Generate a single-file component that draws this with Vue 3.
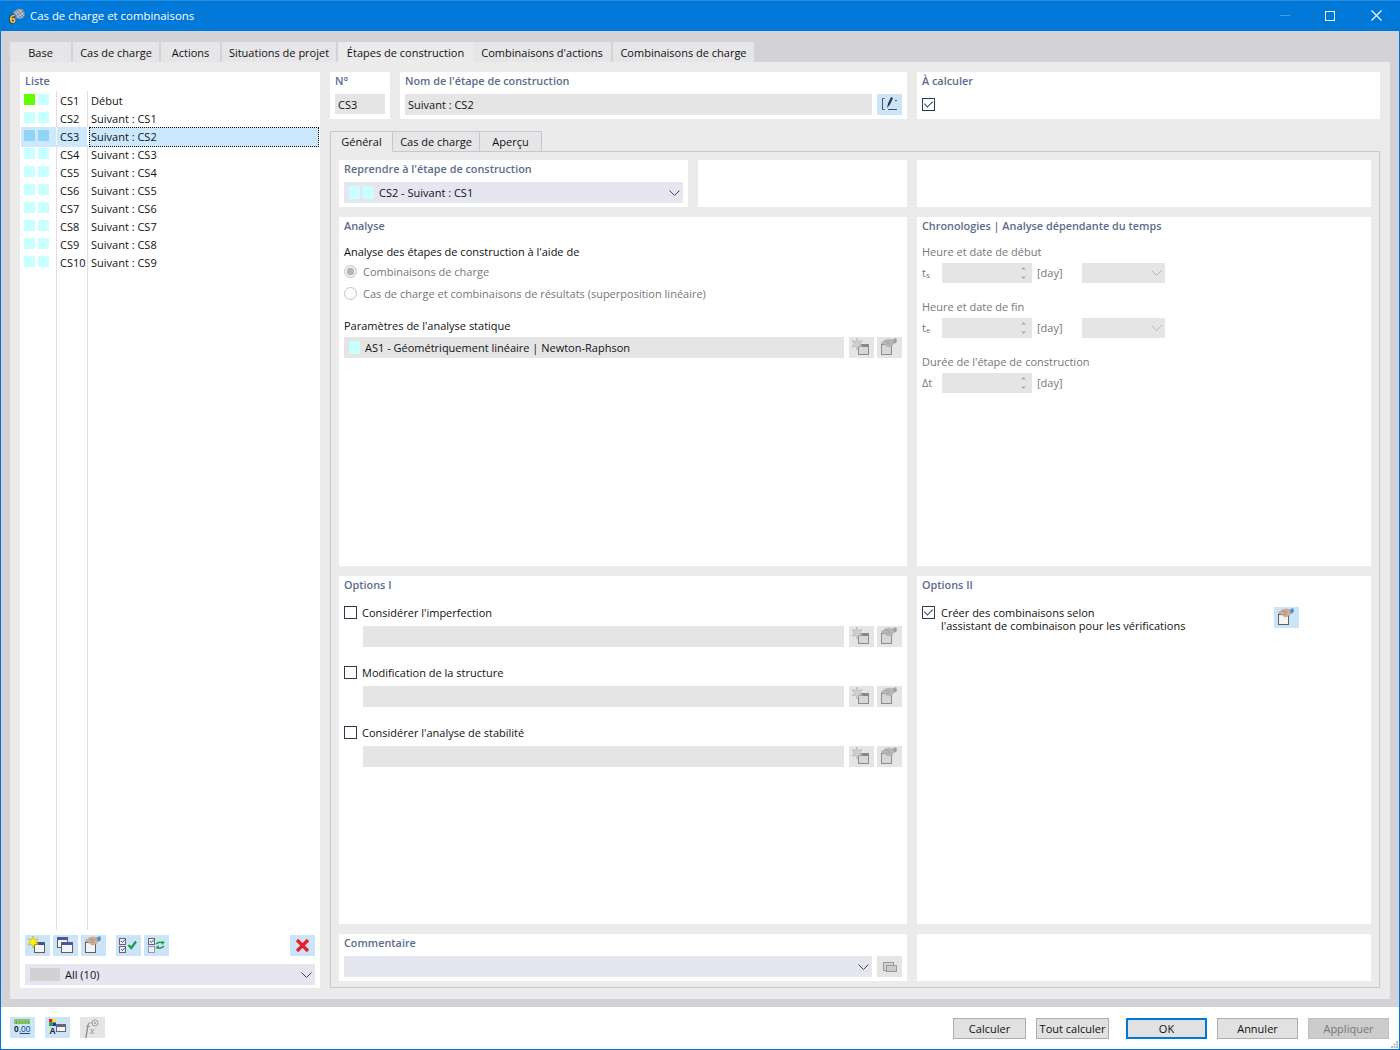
<script setup>
const stages = [
  { id: "CS1", name: "Début", start: true },
  { id: "CS2", name: "Suivant : CS1" },
  { id: "CS3", name: "Suivant : CS2", selected: true },
  { id: "CS4", name: "Suivant : CS3" },
  { id: "CS5", name: "Suivant : CS4" },
  { id: "CS6", name: "Suivant : CS5" },
  { id: "CS7", name: "Suivant : CS6" },
  { id: "CS8", name: "Suivant : CS7" },
  { id: "CS9", name: "Suivant : CS8" },
  { id: "CS10", name: "Suivant : CS9" },
];
const mainTabs = [
  { label: "Base", width: 63 },
  { label: "Cas de charge", width: 88 },
  { label: "Actions", width: 61 },
  { label: "Situations de projet", width: 116 },
  { label: "Étapes de construction", width: 135, active: true },
  { label: "Combinaisons d'actions", width: 140 },
  { label: "Combinaisons de charge", width: 143 },
];
const options = ["Considérer l'imperfection", "Modification de la structure", "Considérer l'analyse de stabilité"];
const times = [
  { label: "Heure et date de début", sym: "t", sub: "s", date: true },
  { label: "Heure et date de fin", sym: "t", sub: "e", date: true },
  { label: "Durée de l'étape de construction", sym: "Δt", sub: "", date: false },
];
</script>

<template>
  <svg class="defs" width="0" height="0">
    <symbol id="win" viewBox="0 0 25 21">
      <rect x="9.500" y="7.500" width="10" height="10" fill="#f4f4f4" stroke="#5f5f5f" />
      <rect x="10" y="8" width="9" height="2" fill="#3f4f8f" />
    </symbol>
    <symbol id="star" viewBox="0 0 25 21">
      <use href="#win" />
      <path d="M8 1l1.300 3.700L13 3.500l-2 3.300 2.500 2.700-3.600-.3L8 13 6.700 9.200 3 10l2.300-3.200L3 3.500l3.700 1.200z" fill="#fff200" stroke="#a89a2a" stroke-width=".5" />
    </symbol>
    <symbol id="copy" viewBox="0 0 25 21">
      <rect x="4.500" y="2.500" width="10" height="10" fill="#f4f4f4" stroke="#5f5f5f" />
      <rect x="5" y="3" width="9" height="2" fill="#3c55c0" />
      <rect x="8.500" y="7.500" width="11" height="10" fill="#f4f4f4" stroke="#5f5f5f" />
      <rect x="9" y="8" width="10" height="2" fill="#3c55c0" />
    </symbol>
    <symbol id="hand" viewBox="0 0 25 21">
      <rect x="4.500" y="7.500" width="10" height="10" fill="#f4f4f4" stroke="#5f5f5f" />
      <path d="M15 3l4-2 1 3-1 2-4 1z" fill="#4d8fd0" />
      <path d="M4 6l4-3 4-1 4 1 1 3-2 3-4 1-3-2-2-1z" fill="#d0ae96" stroke="#a58a78" stroke-width=".4" />
      <path d="M8 4l5 1M9 7l4 0" stroke="#8d7364" stroke-width=".5" />
    </symbol>
  </svg>

  <div class="window">
    <header class="titlebar">
      <svg class="app-icon" width="18" height="18" viewBox="0 0 18 18">
        <path d="M5 5l5-3.500 5 1 2 5-2 4-5 .5z" fill="#7f8ba6" />
        <path d="M6 4l6 8M8.500 3l6 8M11 2l5 7M5.500 8l9-5.500M7.500 11l9-5.500" stroke="#dfe4ee" stroke-width=".6" />
        <text x="1.500" y="15.500" class="six">6</text>
      </svg>
      <span class="window-title">Cas de charge et combinaisons</span>
      <div class="win-btns">
        <span class="win-min"></span>
        <span class="win-max"></span>
        <svg width="11" height="11" viewBox="0 0 11 11" class="win-close">
          <path d="M.5.5l10 10M10.500.5l-10 10" stroke="#fff" stroke-width="1.100" />
        </svg>
      </div>
    </header>

    <div class="main">
      <nav class="tabs">
        <div
          v-for="tab in mainTabs"
          :key="tab.label"
          class="tab"
          :class="{ active: tab.active }"
          :style="{ width: tab.width + 'px' }"
        >
          {{ tab.label }}
        </div>
      </nav>

      <div class="page">
        <aside class="list-panel">
          <h3 class="caption list-caption">Liste</h3>
          <div class="list">
            <div v-for="s in stages" :key="s.id" class="row" :class="{ selected: s.selected }">
              <div class="cell swatches">
                <i class="swatch" :class="{ green: s.start }"></i>
                <i class="swatch"></i>
              </div>
              <div class="cell cell-id">{{ s.id }}</div>
              <div class="cell-name"><span>{{ s.name }}</span></div>
            </div>
            <div class="row filler">
              <div class="cell"></div>
              <div class="cell"></div>
              <div></div>
            </div>
          </div>
          <div class="list-tools">
            <button class="ico"><svg width="25" height="21"><use href="#star" /></svg></button>
            <button class="ico"><svg width="25" height="21"><use href="#copy" /></svg></button>
            <button class="ico"><svg width="25" height="21"><use href="#hand" /></svg></button>
            <button class="ico tool-gap">
              <svg width="25" height="21" viewBox="0 0 25 21">
                <rect x="3.500" y="3.500" width="6" height="6" fill="#eef" stroke="#667" />
                <rect x="3.500" y="11.500" width="6" height="6" fill="#eef" stroke="#667" />
                <path d="M5 6l1.500 1.500L9 4.500M5 14l1.500 1.500L9 12.500" fill="none" stroke="#234" stroke-width=".8" />
                <path d="M12.500 10l2.800 3L20 6.500" fill="none" stroke="#14a04a" stroke-width="2.200" />
              </svg>
            </button>
            <button class="ico">
              <svg width="25" height="21" viewBox="0 0 25 21">
                <rect x="4.500" y="3.500" width="6" height="6" fill="#eef" stroke="#667" />
                <rect x="4.500" y="11.500" width="6" height="6" fill="#eef" stroke="#99a" />
                <path d="M6 6l1.500 1.500L10 4.500" fill="none" stroke="#234" stroke-width=".8" />
                <path d="M12 9c2-2 5-2 7-1M20 11c-2 2-5 3-7 1" fill="none" stroke="#14a04a" stroke-width="1.500" />
                <path d="M21 7l-3 3-.5-4zM11.500 13l3-3 .5 4z" fill="#14a04a" />
              </svg>
            </button>
            <button class="ico tool-end">
              <svg width="25" height="21" viewBox="0 0 25 21">
                <path d="M7 5l11 11M18 5L7 16" stroke="#ee1c25" stroke-width="3.200" />
              </svg>
            </button>
          </div>
          <div class="list-select">
            <i class="filter-swatch"></i>
            <span>All (10)</span>
            <svg class="chev" width="11" height="6" viewBox="0 0 11 6"><path d="M.5.500l5 5 5-5" fill="none" stroke="#444" /></svg>
          </div>
        </aside>

        <section class="content">
          <div class="head">
            <div class="panel head-no">
              <h3 class="caption">N°</h3>
              <div class="field">CS3</div>
            </div>
            <div class="panel head-name">
              <h3 class="caption">Nom de l'étape de construction</h3>
              <div class="field-row">
                <div class="field grow">Suivant : CS2</div>
                <button class="ico edit">
                  <svg width="25" height="21" viewBox="0 0 25 21">
                    <path d="M7.500 4.500H5.500v11h2M11 15.500h9M18 6.500h2" fill="none" stroke="#456" />
                    <path d="M10 14l1-4.500 3-6.500 2 1-3 6.500z" fill="#334" />
                  </svg>
                </button>
              </div>
            </div>
            <div class="panel head-calc">
              <h3 class="caption">À calculer</h3>
              <span class="check on calc-check"></span>
            </div>
          </div>

          <nav class="subtabs">
            <div class="subtab active">Général</div>
            <div class="subtab st2">Cas de charge</div>
            <div class="subtab st3">Aperçu</div>
          </nav>

          <div class="subpage">
            <div class="split-left">
              <div class="panel resume">
                <h3 class="caption">Reprendre à l'étape de construction</h3>
                <div class="combo">
                  <i class="swatch small"></i><i class="swatch small"></i>
                  <span>CS2 - Suivant : CS1</span>
                  <svg class="chev" width="11" height="6" viewBox="0 0 11 6"><path d="M.5.500l5 5 5-5" fill="none" stroke="#444" /></svg>
                </div>
              </div>
              <div class="panel blank"></div>
            </div>
            <div class="panel"></div>

            <div class="panel">
              <h3 class="caption">Analyse</h3>
              <p class="label first">Analyse des étapes de construction à l'aide de</p>
              <div class="radio-row">
                <span class="radio on"></span><span class="muted">Combinaisons de charge</span>
              </div>
              <div class="radio-row second">
                <span class="radio"></span><span class="muted">Cas de charge et combinaisons de résultats (superposition linéaire)</span>
              </div>
              <p class="label params">Paramètres de l'analyse statique</p>
              <div class="field-row gap">
                <div class="field grow as-field"><i class="swatch small"></i>AS1 - Géométriquement linéaire | Newton-Raphson</div>
                <button class="ico off"><svg width="25" height="21"><use href="#star" /></svg></button>
                <button class="ico off"><svg width="25" height="21"><use href="#hand" /></svg></button>
              </div>
            </div>

            <div class="panel">
              <h3 class="caption">Chronologies | Analyse dépendante du temps</h3>
              <div v-for="t in times" :key="t.label" class="time-block">
                <p class="label muted">{{ t.label }}</p>
                <div class="time-row">
                  <span class="sym muted">{{ t.sym }}<sub v-if="t.sub">{{ t.sub }}</sub></span>
                  <div class="spin">
                    <svg width="7" height="14" viewBox="0 0 7 14"><path d="M3.500 1L6 3.500H1zM3.500 13L1 10.500h5z" fill="#aaa" /></svg>
                  </div>
                  <span class="unit muted">[day]</span>
                  <div v-if="t.date" class="date">
                    <svg class="chev" width="11" height="6" viewBox="0 0 11 6"><path d="M.5.500l5 5 5-5" fill="none" stroke="#b5b5b5" /></svg>
                  </div>
                </div>
              </div>
            </div>

            <div class="panel">
              <h3 class="caption">Options I</h3>
              <div v-for="o in options" :key="o" class="option">
                <div class="check-row">
                  <span class="check"></span><span>{{ o }}</span>
                </div>
                <div class="field-row gap indent">
                  <div class="field grow"></div>
                  <button class="ico off"><svg width="25" height="21"><use href="#star" /></svg></button>
                  <button class="ico off"><svg width="25" height="21"><use href="#hand" /></svg></button>
                </div>
              </div>
            </div>

            <div class="panel">
              <h3 class="caption">Options II</h3>
              <div class="opt2">
                <span class="check on"></span>
                <span class="opt2-text">Créer des combinaisons selon<br />l'assistant de combinaison pour les vérifications</span>
                <button class="ico"><svg width="25" height="21"><use href="#hand" /></svg></button>
              </div>
            </div>

            <div class="panel">
              <h3 class="caption">Commentaire</h3>
              <div class="field-row">
                <div class="combo grow">
                  <svg class="chev" width="11" height="6" viewBox="0 0 11 6"><path d="M.5.500l5 5 5-5" fill="none" stroke="#444" /></svg>
                </div>
                <button class="ico off">
                  <svg width="25" height="21" viewBox="0 0 25 21">
                    <rect x="6.500" y="6.500" width="10" height="8" fill="#eee" stroke="#777" />
                    <rect x="9.500" y="9.500" width="10" height="6" fill="#ddd" stroke="#777" />
                  </svg>
                </button>
              </div>
            </div>
            <div class="panel"></div>
          </div>
        </section>
      </div>
    </div>

    <footer class="footer">
      <button class="ico">
        <svg width="25" height="21" viewBox="0 0 25 21">
          <rect x="4" y="2" width="16" height="5" fill="#8cc56f" />
          <path d="M6.500 4v3M9.500 4v3M12.500 4v3M15.500 4v3M18.500 4v3" stroke="#5e9147" stroke-width=".6" />
          <text x="4" y="15" class="zero">0<tspan class="zero-blue">,00</tspan></text>
          <path d="M10 16.500h10" stroke="#234a9a" />
        </svg>
      </button>
      <button class="ico">
        <svg width="25" height="21" viewBox="0 0 25 21">
          <rect x="4" y="2" width="3.500" height="3.500" fill="#d22" />
          <rect x="7.500" y="2" width="3.500" height="3.500" fill="#ee2" />
          <rect x="4" y="5.500" width="3.500" height="3.500" fill="#2a2" />
          <rect x="7.500" y="5.500" width="3.500" height="3.500" fill="#23c" />
          <text x="4.500" y="17" class="zero">A</text>
          <rect x="11.500" y="7.500" width="9" height="7" fill="#f4f4f4" stroke="#667" />
          <rect x="12" y="8" width="8" height="2" fill="#667" />
        </svg>
      </button>
      <button class="ico off">
        <svg width="25" height="21" viewBox="0 0 25 21">
          <text x="5" y="17" class="fx">f<tspan class="fx-x">x</tspan></text>
          <circle cx="15" cy="6" r="3" fill="none" stroke="#777" />
          <circle cx="15" cy="6" r="1" fill="#777" />
        </svg>
      </button>
      <div class="actions">
        <button class="btn narrow">Calculer</button>
        <button class="btn narrow">Tout calculer</button>
        <button class="btn primary">OK</button>
        <button class="btn">Annuler</button>
        <button class="btn disabled">Appliquer</button>
      </div>
      <svg class="grip" width="7" height="7" viewBox="0 0 7 7">
        <path d="M5 0h2v2H5zM2.500 2.500h2v2h-2zM5 2.500h2v2H5zM0 5h2v2H0zM2.500 5h2v2h-2zM5 5h2v2H5z" fill="#bcbcbc" />
      </svg>
    </footer>
  </div>
</template>

<style scoped>
.defs {
  position: absolute;
}

.window {
  width: 1400px;
  height: 1050px;
  display: flex;
  flex-direction: column;
  box-sizing: border-box;
  border: 1px solid #0078d7;
  border-top: 0;
  background: #fff;
  font-family: "Open Sans", "Noto Sans", sans-serif;
  font-size: 11px;
  color: #111;
}

.titlebar {
  height: 31px;
  flex: none;
  display: flex;
  align-items: center;
  box-sizing: border-box;
  background: #0078d7;
  border-top: 1px solid #2a8cdc;
  color: #fff;
  padding: 0 0 1px 8px;
  margin: 0 -1px;
}

.app-icon {
  flex: none;
  margin-right: 4px;
}

.six {
  font-size: 10.500px;
  font-weight: 700;
  fill: #ffcf33;
  stroke: #333;
  stroke-width: 1.200px;
  paint-order: stroke;
}

.window-title {
  font-size: 11.400px;
}

.win-btns {
  margin-left: auto;
  display: flex;
  align-items: center;
  width: 120px;
}

.win-min {
  width: 10px;
  height: 1px;
  background: #4a9de0;
}

.win-max {
  width: 8px;
  height: 8px;
  border: 1px solid #fff;
  margin-left: 35px;
}

.win-close {
  margin-left: 36px;
}

.main {
  flex: 1;
  background: #d3d2d6;
  padding: 11px 9px 8px;
  display: flex;
  flex-direction: column;
  min-height: 0;
}

.tabs {
  display: flex;
  height: 20px;
  flex: none;
}

.tab {
  box-sizing: border-box;
  background: #e6e6e8;
  border-right: 2px solid #d3d2d6;
  text-align: center;
  line-height: 22px;
  white-space: nowrap;
}

.tab.active {
  background: #ebebeb;
  border-right: 0;
}

.page {
  flex: 1;
  min-height: 0;
  background: #ebebeb;
  padding: 10px 10px 11px;
  display: flex;
  gap: 10px;
}

.panel {
  background: #fff;
  padding: 0 5px;
  min-width: 0;
}

.caption {
  margin: 0;
  font-size: 10.850px;
  font-weight: 600;
  color: #5c6b8c;
  line-height: 18px;
}

.list-panel {
  width: 300px;
  flex: none;
  background: #fff;
  display: flex;
  flex-direction: column;
  box-sizing: border-box;
  padding: 0 1px;
}

.list-caption {
  padding: 0 4px 1px;
}

.list {
  flex: 1;
  min-height: 0;
  display: flex;
  flex-direction: column;
}

.row {
  display: grid;
  grid-template-columns: 36px 31px 1fr;
  height: 18px;
  flex: none;
  line-height: 20px;
}

.row.filler {
  flex: 1;
}

.cell {
  border-right: 1px solid #e0e0e0;
  padding-left: 3px;
  white-space: nowrap;
}

.swatches {
  display: flex;
  gap: 3px;
  padding: 3px 0 0 3px;
}

.swatch {
  display: block;
  width: 11px;
  height: 11px;
  background: #c8ffff;
}

.swatch.green {
  background: #5fff00;
}

.row.selected .swatch {
  background: #90d5f5;
}

.row.selected .cell {
  background: #cce8ff;
  border-right-color: #fff;
}

.cell-name {
  padding-left: 1px;
}

.cell-name span {
  display: block;
  height: 100%;
  padding-left: 2px;
  box-sizing: border-box;
}

.row.selected .cell-name span {
  background: #cce8ff;
  outline: 1px dotted #111;
  outline-offset: -1px;
}

.list-tools {
  display: flex;
  gap: 3px;
  padding: 5px 4px 8px;
}

.ico {
  width: 25px;
  height: 21px;
  flex: none;
  border: 0;
  padding: 0;
  background: #cce4f7;
  display: block;
}

.ico svg {
  display: block;
}

.ico.off {
  background: #e5e5e5;
}

.ico.off svg {
  filter: grayscale(1) brightness(0.85);
  opacity: 0.6;
}

.tool-gap {
  margin-left: 7px;
}

.tool-end {
  margin-left: auto;
}

.list-select {
  margin: 0 4px 3px;
  height: 21px;
  flex: none;
  background: #e6e6f0;
  display: flex;
  align-items: center;
  padding: 0 3px 0 5px;
}

.filter-swatch {
  width: 30px;
  height: 13px;
  background: #d2d2d2;
  margin-right: 5px;
}

.chev {
  margin-left: auto;
  flex: none;
}

.content {
  flex: 1;
  min-width: 0;
  display: flex;
  flex-direction: column;
}

.head {
  display: flex;
  gap: 10px;
  height: 47px;
  flex: none;
}

.head-no {
  width: 60px;
  box-sizing: border-box;
}

.head-name {
  width: 507px;
  box-sizing: border-box;
}

.head-calc {
  flex: 1;
}

.head .caption {
  margin-bottom: 4px;
}

.calc-check {
  display: block;
  margin-top: 4px;
}

.field {
  background: #e5e5e5;
  height: 20px;
  line-height: 21px;
  padding-left: 3px;
}

.field-row {
  display: flex;
  gap: 5px;
}

.field-row.gap .ico + .ico {
  margin-left: -2px;
}

.grow {
  flex: 1;
  min-width: 0;
}

.field-row .field {
  height: 21px;
}

.subtabs {
  display: flex;
  margin-top: 12px;
  height: 21px;
  flex: none;
  position: relative;
  z-index: 1;
}

.subtab {
  box-sizing: border-box;
  height: 21px;
  border: 1px solid #c8c8cc;
  border-left: 0;
  text-align: center;
  line-height: 19px;
  background: #e6e6e8;
}

.subtab.active {
  width: 63px;
  border-left: 1px solid #c8c8cc;
  border-bottom-color: #ebebeb;
  background: #ebebeb;
}

.st2 {
  width: 87px;
}

.st3 {
  width: 62px;
}

.subpage {
  flex: 1;
  min-height: 0;
  margin-top: -1px;
  border: 1px solid #c8c8cc;
  background: #ebebeb;
  padding: 8px;
  display: grid;
  grid-template-columns: 568px 454px;
  grid-template-rows: 47px 349px 348px 47px;
  gap: 10px;
}

.split-left {
  display: flex;
  gap: 10px;
}

.resume {
  width: 349px;
  box-sizing: border-box;
}

.blank {
  flex: 1;
}

.combo {
  height: 21px;
  margin-top: 4px;
  background: #e6e6f0;
  display: flex;
  align-items: center;
  gap: 3px;
  padding: 0 3px 0 5px;
}

.swatch.small {
  width: 11px;
  height: 13px;
  flex: none;
}

.combo span {
  margin-left: 2px;
}

.field-row .combo {
  margin-top: 0;
}

.panel > .field-row {
  margin-top: 4px;
}

.label {
  margin: 0;
  line-height: 16px;
}

.first {
  margin-top: 9px;
}

.muted {
  color: #777;
}

.radio-row {
  display: flex;
  align-items: center;
  gap: 6px;
  height: 16px;
  margin-top: 3px;
}

.radio-row.second {
  margin-top: 6px;
}

.radio {
  width: 13px;
  height: 13px;
  box-sizing: border-box;
  border: 1px solid #c4c4c4;
  border-radius: 50%;
  flex: none;
  position: relative;
}

.radio.on {
  background: radial-gradient(circle, #b5b5b5 0 3.500px, #efefef 4px);
}

.params {
  margin-top: 17px;
}

.panel > .field-row.gap {
  margin-top: 3px;
}

.as-field {
  display: flex;
  align-items: center;
  gap: 5px;
  padding-left: 5px;
}

.time-block {
  margin-bottom: 16px;
}

.time-block:first-of-type {
  margin-top: 9px;
}

.time-row {
  display: flex;
  align-items: center;
  height: 20px;
  margin-top: 3px;
}

.sym {
  width: 20px;
  margin-top: -2px;
}

.sym sub {
  font-size: 8px;
  line-height: 0;
  vertical-align: -1px;
}

.spin {
  width: 90px;
  height: 20px;
  background: #e5e5e5;
  display: flex;
  align-items: center;
  justify-content: flex-end;
  padding-right: 5px;
  box-sizing: border-box;
}

.unit {
  margin-left: 5px;
  margin-top: -2px;
  width: 45px;
}

.date {
  width: 83px;
  height: 20px;
  background: #e5e5e5;
  display: flex;
  align-items: center;
  padding-right: 3px;
  box-sizing: border-box;
}

.check {
  display: inline-block;
  width: 13px;
  height: 13px;
  box-sizing: border-box;
  border: 1px solid #2a3b52;
  flex: none;
  position: relative;
}

.check.on::after {
  content: "";
  position: absolute;
  left: 3px;
  top: 0;
  width: 4px;
  height: 7px;
  border: solid #2a3b52;
  border-width: 0 1px 1px 0;
  transform: rotate(45deg);
}

.option {
  margin-bottom: 17px;
}

.option:first-of-type {
  margin-top: 10px;
}

.check-row {
  display: flex;
  align-items: center;
  gap: 5px;
  height: 16px;
  margin-bottom: 6px;
}

.indent {
  margin-left: 19px;
}

.opt2 {
  display: flex;
  align-items: flex-start;
  margin-top: 10px;
}

.opt2 .check {
  margin-right: 6px;
  margin-top: 2px;
}

.opt2 .ico {
  margin-top: 3px;
}

.opt2-text {
  width: 333px;
  line-height: 13px;
  margin-top: 2px;
}

.footer {
  height: 42px;
  flex: none;
  display: flex;
  align-items: flex-start;
  padding: 10px 10px 0 9px;
  gap: 10px;
  box-sizing: border-box;
  position: relative;
}

.actions {
  margin-left: auto;
  display: flex;
  gap: 10px;
  margin-top: 1px;
}

.btn {
  width: 81px;
  height: 21px;
  box-sizing: border-box;
  border: 1px solid #adadad;
  background: #e1e1e1;
  font: inherit;
  color: #111;
  padding: 0;
}

.narrow {
  width: 73px;
}

.primary {
  border: 2px solid #0078d7;
  margin-left: 7px;
}

.disabled {
  background: #ccc;
  border-color: #bfbfbf;
  color: #777;
}

.grip {
  position: absolute;
  right: 1px;
  bottom: 1px;
}

.zero {
  font-family: "Liberation Sans", sans-serif;
  font-size: 8.500px;
  font-weight: 700;
  fill: #222;
}

.zero-blue {
  fill: #234a9a;
  font-weight: 400;
}

.fx {
  font-family: "Liberation Serif", serif;
  font-style: italic;
  font-size: 17px;
  fill: #666;
}

.fx-x {
  font-size: 11px;
}
</style>
